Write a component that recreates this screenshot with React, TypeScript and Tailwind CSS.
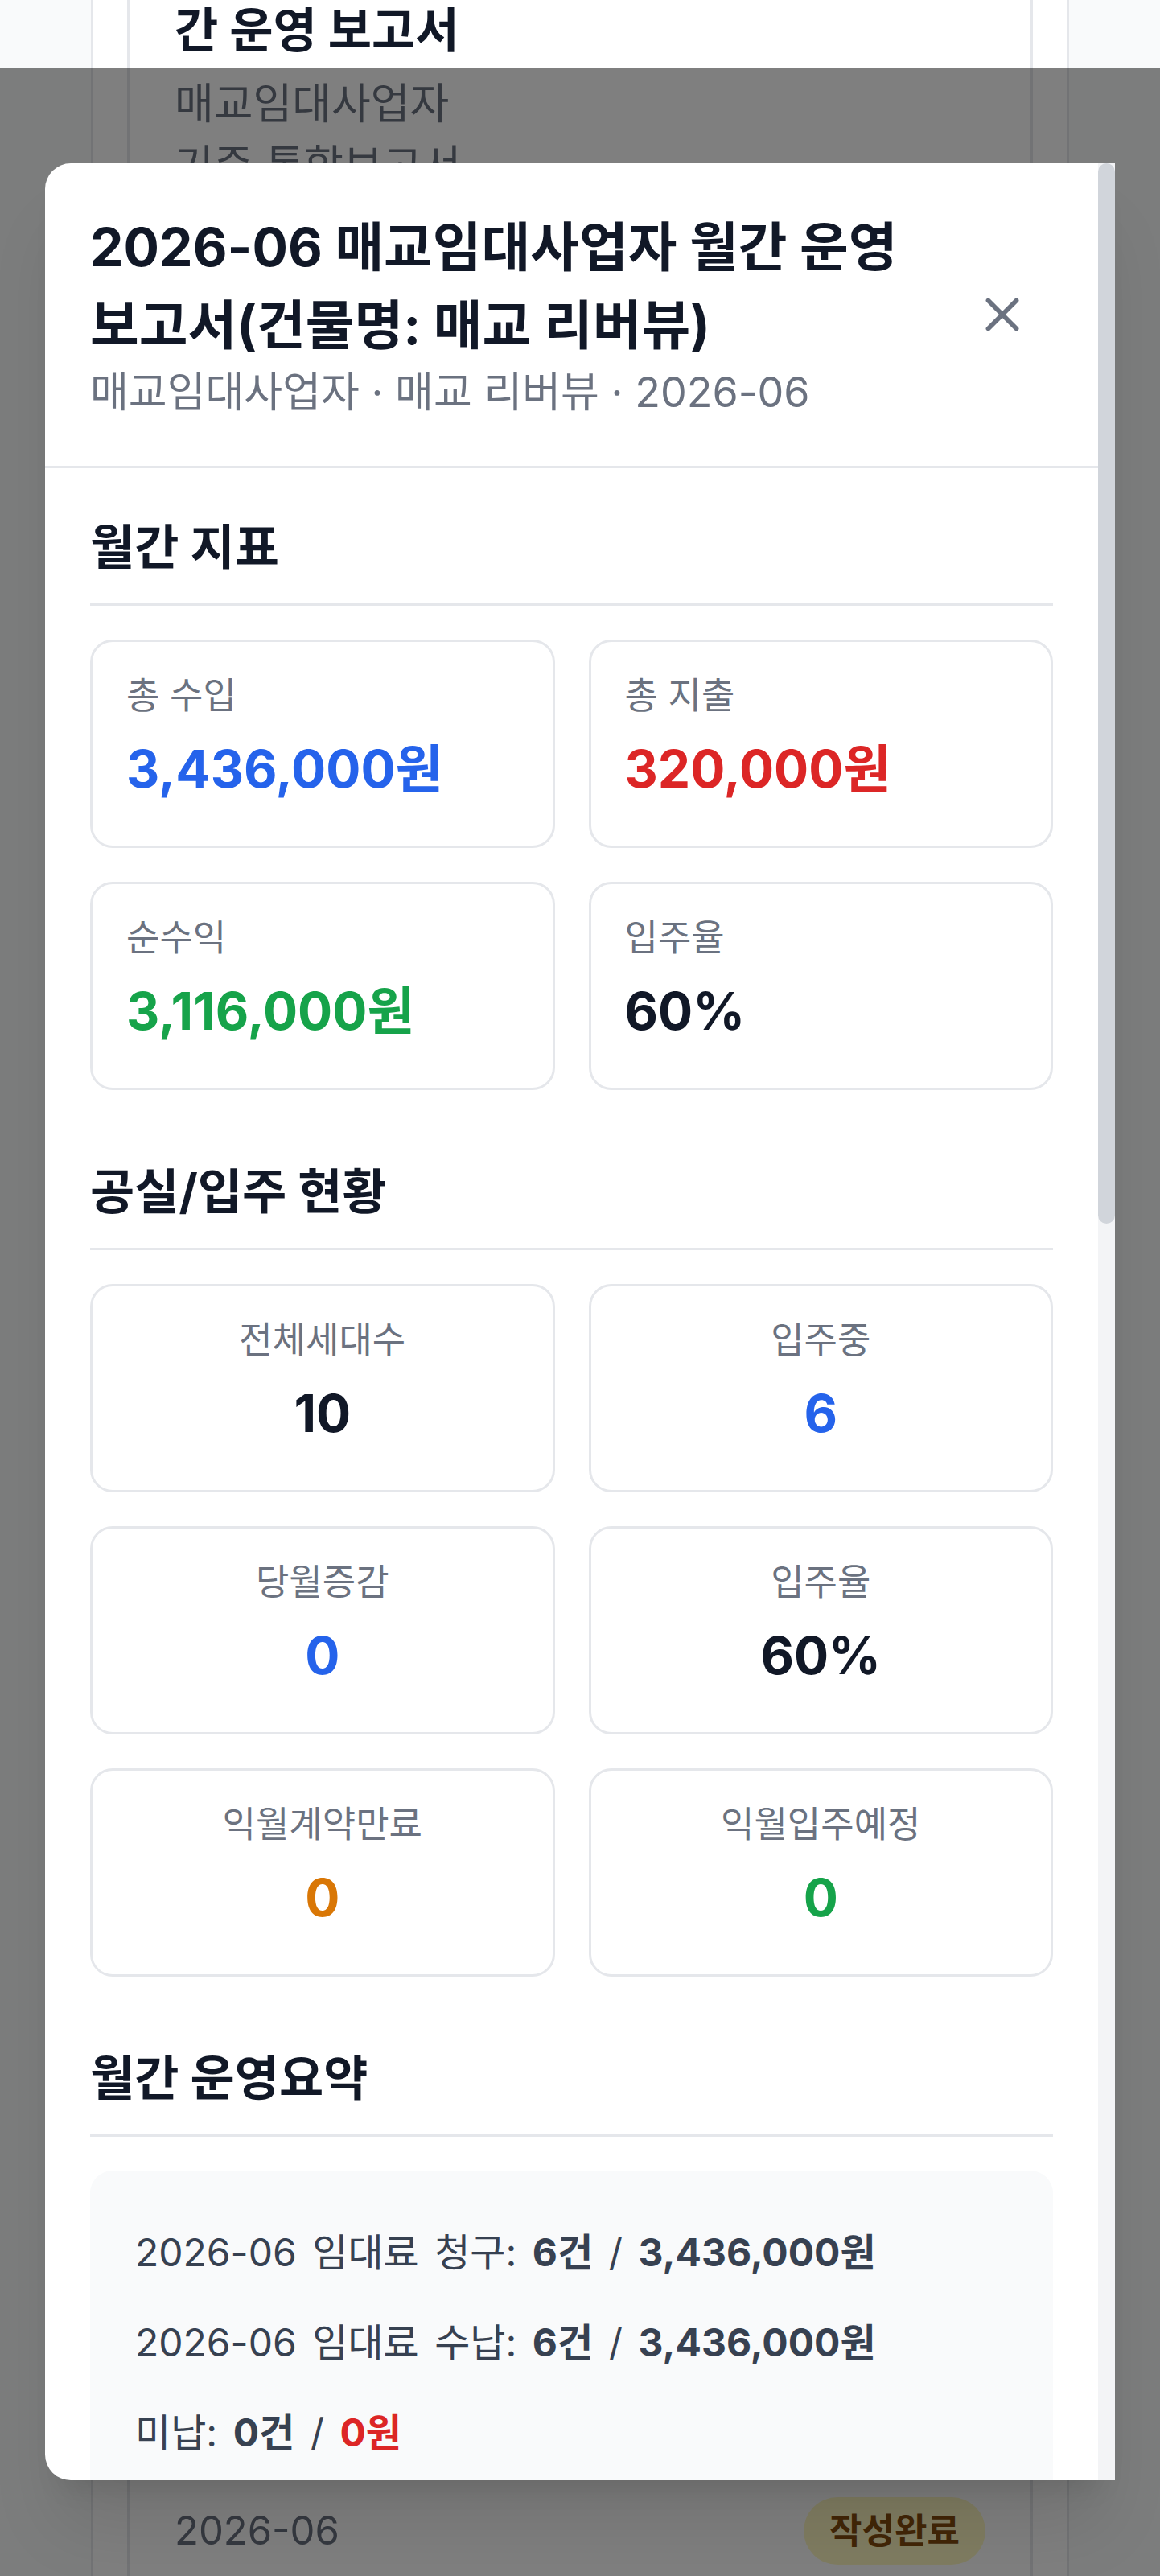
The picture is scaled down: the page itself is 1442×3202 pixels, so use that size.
import React from "react";
import { X } from "lucide-react";

const metrics = [
  { label: "총 수입", value: "3,436,000원", color: "text-[#2563eb]" },
  { label: "총 지출", value: "320,000원", color: "text-[#dc2626]" },
  { label: "순수익", value: "3,116,000원", color: "text-[#16a34a]" },
  { label: "입주율", value: "60%", color: "text-[#111827]" },
];

const occupancy = [
  { label: "전체세대수", value: "10", color: "text-[#111827]" },
  { label: "입주중", value: "6", color: "text-[#2563eb]" },
  { label: "당월증감", value: "0", color: "text-[#2563eb]" },
  { label: "입주율", value: "60%", color: "text-[#111827]" },
  { label: "익월계약만료", value: "0", color: "text-[#d97706]" },
  { label: "익월입주예정", value: "0", color: "text-[#16a34a]" },
];

const SectionTitle: React.FC<{ children: React.ReactNode }> = ({ children }) => (
  <h3 className="mb-[42px] border-b-[3px] border-[#e5e7eb] pb-[28px] text-[60px] leading-[84px] font-bold text-[#111827]">
    {children}
  </h3>
);

const StatCard: React.FC<{ label: string; value: string; color: string; center?: boolean }> = ({
  label,
  value,
  color,
  center,
}) => (
  <div
    className={`rounded-[28px] border-[3px] border-[#e5e7eb] bg-white px-[42px] pt-[32px] pb-[46px] ${center ? "text-center" : ""}`}
  >
    <p className="text-[45px] leading-[70px] text-[#6b7280]">{label}</p>
    <p className={`mt-[7px] text-[64px] leading-[98px] font-bold ${color}`}>{value}</p>
  </div>
);

const App: React.FC = () => {
  return (
    <div className="relative h-[3202px] overflow-hidden bg-[#f9fafb] font-[family-name:Inter,'Noto_Sans_CJK_KR',sans-serif]">
      {/* page behind the dialog */}
      <div className="-mt-[192px] ml-[113px] flex w-[1216px] flex-col gap-[42px] rounded-[28px] border-[3px] border-[#e5e7eb] bg-white p-[42px]">
        <div className="h-[3150px] rounded-[28px] border-[3px] border-[#e5e7eb] p-[56px]">
          <h3 className="text-[59px] leading-[84px] font-bold text-[#111827]">
            2026-06 매교임대사업자 월
            <br />
            간 운영 보고서
          </h3>
          <p className="mt-[14px] text-[53px] leading-[70px] text-[#6b7280]">매교임대사업자</p>
          <p className="mt-[7px] text-[53px] leading-[70px] text-[#6b7280]">기준 통합보고서</p>
        </div>
        <div className="rounded-[28px] border-[3px] border-[#e5e7eb] p-[56px]">
          <div className="flex items-center justify-between">
            <span className="text-[49px] leading-[70px] text-[#6b7280]">2026-06</span>
            <span className="rounded-full bg-[#fef9c3] px-[32px] py-[14px] text-[44px] leading-[56px] font-semibold text-[#854d0e]">
              작성완료
            </span>
          </div>
        </div>
      </div>

      {/* overlay */}
      <div className="absolute inset-x-0 top-[84px] bottom-0 bg-black/50 px-[56px] pt-[119px]">
        <div className="flex h-[2880px] overflow-hidden rounded-l-[32px] bg-white shadow-[0_70px_87px_-17px_rgba(0,0,0,0.1),0_28px_35px_-21px_rgba(0,0,0,0.1)]">
          <div className="min-w-0 flex-1">
            {/* header */}
            <div className="flex items-center justify-between gap-[28px] border-b-[3px] border-[#e5e7eb] p-[56px]">
              <div className="min-w-0 flex-1">
                <h2 className="break-keep text-[66px] leading-[97px] font-bold text-[#111827]">
                  2026-06 매교임대사업자 월간 운영 보고서(건물명: 매교 리버뷰)
                </h2>
                <p className="text-[52px] leading-[70px] text-[#6b7280]">
                  매교임대사업자 · 매교 리버뷰 · 2026-06
                </p>
              </div>
              <button className="shrink-0 rounded-[14px] p-[28px] text-[#6b7280]">
                <X size={70} strokeWidth={2} />
              </button>
            </div>

            {/* body */}
            <div className="flex flex-col gap-[84px] p-[56px]">
              <section>
                <SectionTitle>월간 지표</SectionTitle>
                <div className="grid grid-cols-2 gap-[42px]">
                  {metrics.map((m) => (
                    <StatCard key={m.label} {...m} />
                  ))}
                </div>
              </section>

              <section>
                <SectionTitle>공실/입주 현황</SectionTitle>
                <div className="grid grid-cols-2 gap-[42px]">
                  {occupancy.map((m, i) => (
                    <StatCard key={i} {...m} center />
                  ))}
                </div>
              </section>

              <section>
                <SectionTitle>월간 운영요약</SectionTitle>
                <div className="flex flex-col gap-[28px] rounded-[28px] bg-[#f9fafb] p-[56px] pt-[60px] text-[48px] leading-[84px] text-[#374151] [word-spacing:6px]">
                  <p>
                    2026-06 임대료 청구: <b className="font-bold">6건</b> / <b className="font-bold">3,436,000원</b>
                  </p>
                  <p>
                    2026-06 임대료 수납: <b className="font-bold">6건</b> / <b className="font-bold">3,436,000원</b>
                  </p>
                  <p>
                    미납: <b className="font-bold">0건</b> / <b className="font-bold text-[#dc2626]">0원</b>
                  </p>
                </div>
              </section>
            </div>
          </div>

          {/* scrollbar */}
          <div className="w-[21px] shrink-0 bg-[#f3f4f6]">
            <div className="h-[1318px] rounded-full bg-[#d1d5db]" />
          </div>
        </div>
      </div>
    </div>
  );
};

export default App;
